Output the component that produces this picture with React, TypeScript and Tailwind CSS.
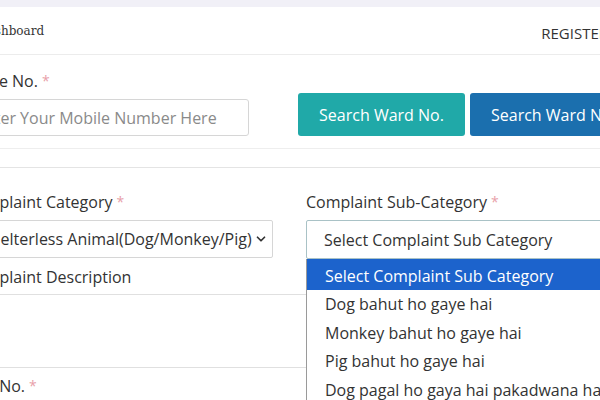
import { ChevronDown } from 'lucide-react';

const options = [
  'Dog bahut ho gaye hai',
  'Monkey bahut ho gaye hai',
  'Pig bahut ho gaye hai',
  'Dog pagal ho gaya hai pakadwana hai',
];

function Star() {
  return <span className="text-[#e8a0a8] text-[14px] ml-1 align-top">*</span>;
}

export default function App() {
  return (
    <div className="w-[600px] h-[400px] overflow-hidden bg-white text-[#444] font-['Open_Sans',sans-serif]">
      <div className="h-[7px] bg-[#f1f0f7]" />
      <header className="h-[48px] flex items-center justify-between border-b border-[#ececec]">
        <span className="-ml-[22px] font-['DejaVu_Serif','Liberation_Serif',serif] text-[12px] text-[#333]">Dashboard</span>
        <span className="mt-[6px] -mr-[8px] text-[15px] text-[#333]">REGISTER</span>
      </header>

      <section className="flex">
        <div className="w-[341px] shrink-0 -ml-[43px] pt-[14px]">
          <label className="block text-[16px] leading-6 text-[#333]">Mobile No.<Star /></label>
          <input
            readOnly
            placeholder="Enter Your Mobile Number Here"
            className="mt-[6px] w-[292px] h-[37px] border border-[#d6d6d6] rounded-[3px] pl-[18px] text-[16px] placeholder:text-[#8a8a8a] outline-none"
          />
        </div>
        <div className="flex gap-[5px] pt-[38px]">
          <button className="w-[167px] h-[43px] shrink-0 rounded-[3px] bg-[#20a9a8] text-white text-[16px]">Search Ward No.</button>
          <button className="w-[167px] h-[43px] shrink-0 rounded-[3px] bg-[#1b6fae] text-white text-[16px] text-left pl-[21px]">Search Ward No.</button>
        </div>
      </section>

      <div className="mt-[12px] border-t border-[#eeeeee]" />
      <div className="mt-[18px] border-t border-[#e4e4e4]" />

      <section className="flex mt-[22px]">
        <div className="w-[306px] shrink-0">
          <label className="block -ml-[35px] text-[16px] leading-6 text-[#333]">Complaint Category<Star /></label>
          <div className="mt-[6px] -ml-[40px] w-[313px] h-[38px] border border-[#d6d6d6] rounded-[2px] flex items-center pl-[21px] pr-[3px]">
            <span className="flex-1 overflow-hidden whitespace-nowrap text-[16px] text-[#333]">Shelterless Animal(Dog/Monkey/Pig)Related</span>
            <ChevronDown size={14} strokeWidth={3} className="ml-[2px] mr-[1px] text-[#333]" />
          </div>
          <label className="block mt-[7px] -ml-[35px] text-[16px] leading-6 text-[#333]">Complaint Description</label>
          <div className="mt-[5px] -ml-[40px] h-[74px] border-t border-b border-[#e0e0e0]" />
          <label className="block mt-[6px] -ml-[45px] text-[16px] leading-6 text-[#333]">Ward No.<Star /></label>
        </div>

        <div className="flex-1 -mr-[40px]">
          <label className="block text-[16px] leading-6 text-[#333]">Complaint Sub-Category<Star /></label>
          <div className="mt-[6px] h-[39px] border border-[#a9c2c6] rounded-[2px] flex items-center pl-[17px] text-[16px] text-[#333]">
            Select Complaint Sub Category
          </div>
          <ul className="border-l border-[#9a9a9a] bg-white text-[16px] text-[#333]">
            <li className="h-[31px] flex items-center pt-[2px] pl-[18px] bg-[#1c63cc] text-white">Select Complaint Sub Category</li>
            {options.map((o) => (
              <li key={o} className="h-[28.5px] flex items-center pl-[18px] whitespace-nowrap">{o}</li>
            ))}
          </ul>
        </div>
      </section>
    </div>
  );
}
